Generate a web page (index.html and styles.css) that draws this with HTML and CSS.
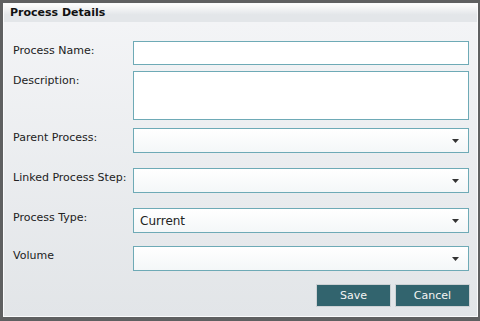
FILE: index.html
```html
<!DOCTYPE html>
<html lang="en">
<head>
  <meta charset="UTF-8">
  <title>Process Details</title>
  <link rel="stylesheet" href="styles.css">
</head>
<body>
  <div class="dialog">
    <div class="dialog-title">Process Details</div>
    <div class="dialog-body">
      <div class="row row-name">
        <label>Process Name:</label>
        <input type="text" class="field">
      </div>
      <div class="row row-desc">
        <label>Description:</label>
        <textarea class="field area"></textarea>
      </div>
      <div class="row">
        <label>Parent Process:</label>
        <div class="field dropdown"><span></span><svg width="7" height="4" viewBox="0 0 7 4"><path d="M0 0H7L3.5 4Z" fill="#333"/></svg></div>
      </div>
      <div class="row">
        <label>Linked Process Step:</label>
        <div class="field dropdown"><span></span><svg width="7" height="4" viewBox="0 0 7 4"><path d="M0 0H7L3.5 4Z" fill="#333"/></svg></div>
      </div>
      <div class="row row-type">
        <label>Process Type:</label>
        <div class="field dropdown"><span>Current</span><svg width="7" height="4" viewBox="0 0 7 4"><path d="M0 0H7L3.5 4Z" fill="#333"/></svg></div>
      </div>
      <div class="row row-last">
        <label>Volume</label>
        <div class="field dropdown"><span></span><svg width="7" height="4" viewBox="0 0 7 4"><path d="M0 0H7L3.5 4Z" fill="#333"/></svg></div>
      </div>
      <div class="actions">
        <button class="btn">Save</button>
        <button class="btn">Cancel</button>
      </div>
    </div>
  </div>
</body>
</html>
```

FILE: styles.css
```css
* {
  margin: 0;
  padding: 0;
  box-sizing: border-box;
}
body {
  font-family: 'DejaVu Sans', sans-serif;
  font-size: 11px;
  color: #222;
  background-color: #5f6061;
  padding: 3px 3px 0 3px;
  width: 480px;
  height: 321px;
  overflow: hidden;
}
.dialog {
  width: 475px;
  height: 314px;
  border: 1px solid #fafbfc;
  background: linear-gradient(#f4f5f7, #e2e5e8);
}
.dialog-title {
  height: 18px;
  padding-left: 6px;
  font-size: 11px;
  font-weight: bold;
  color: #111;
  line-height: 18px;
  background: linear-gradient(#fdfdfd, #e3e6e9 60%);
}
.dialog-body {
  padding: 19px 7px 0 9px;
}
.row {
  display: grid;
  grid-template-columns: 120px 336px;
  margin-bottom: 15px;
}
.row label {
  padding-top: 3px;
  line-height: 14px;
}
.row-name {
  margin-bottom: 6px;
}
.row-desc {
  margin-bottom: 8px;
}
.row-type {
  margin-bottom: 13px;
}
.row-last {
  margin-bottom: 13px;
}
.field {
  display: block;
  width: 336px;
  height: 25px;
  border: 1px solid #6eaab6;
  background-color: #fff;
  font-family: inherit;
  font-size: 12px;
  outline: none;
}
.row-name .field {
  height: 24px;
}
.area {
  height: 49px;
  resize: none;
}
.dropdown {
  display: flex;
  align-items: center;
  justify-content: space-between;
  padding: 0 9px 0 6px;
  background: linear-gradient(#ffffff, #f4f7f8);
  color: #222;
}
.dropdown svg {
  margin-top: 1px;
}
.actions {
  display: flex;
  justify-content: flex-end;
  gap: 4px;
}
.btn {
  width: 75px;
  height: 23px;
  border: 1px solid #cdd1d4;
  background-color: #32646e;
  color: #f4f4f4;
  font-family: inherit;
  font-size: 11px;
  cursor: pointer;
}
```
